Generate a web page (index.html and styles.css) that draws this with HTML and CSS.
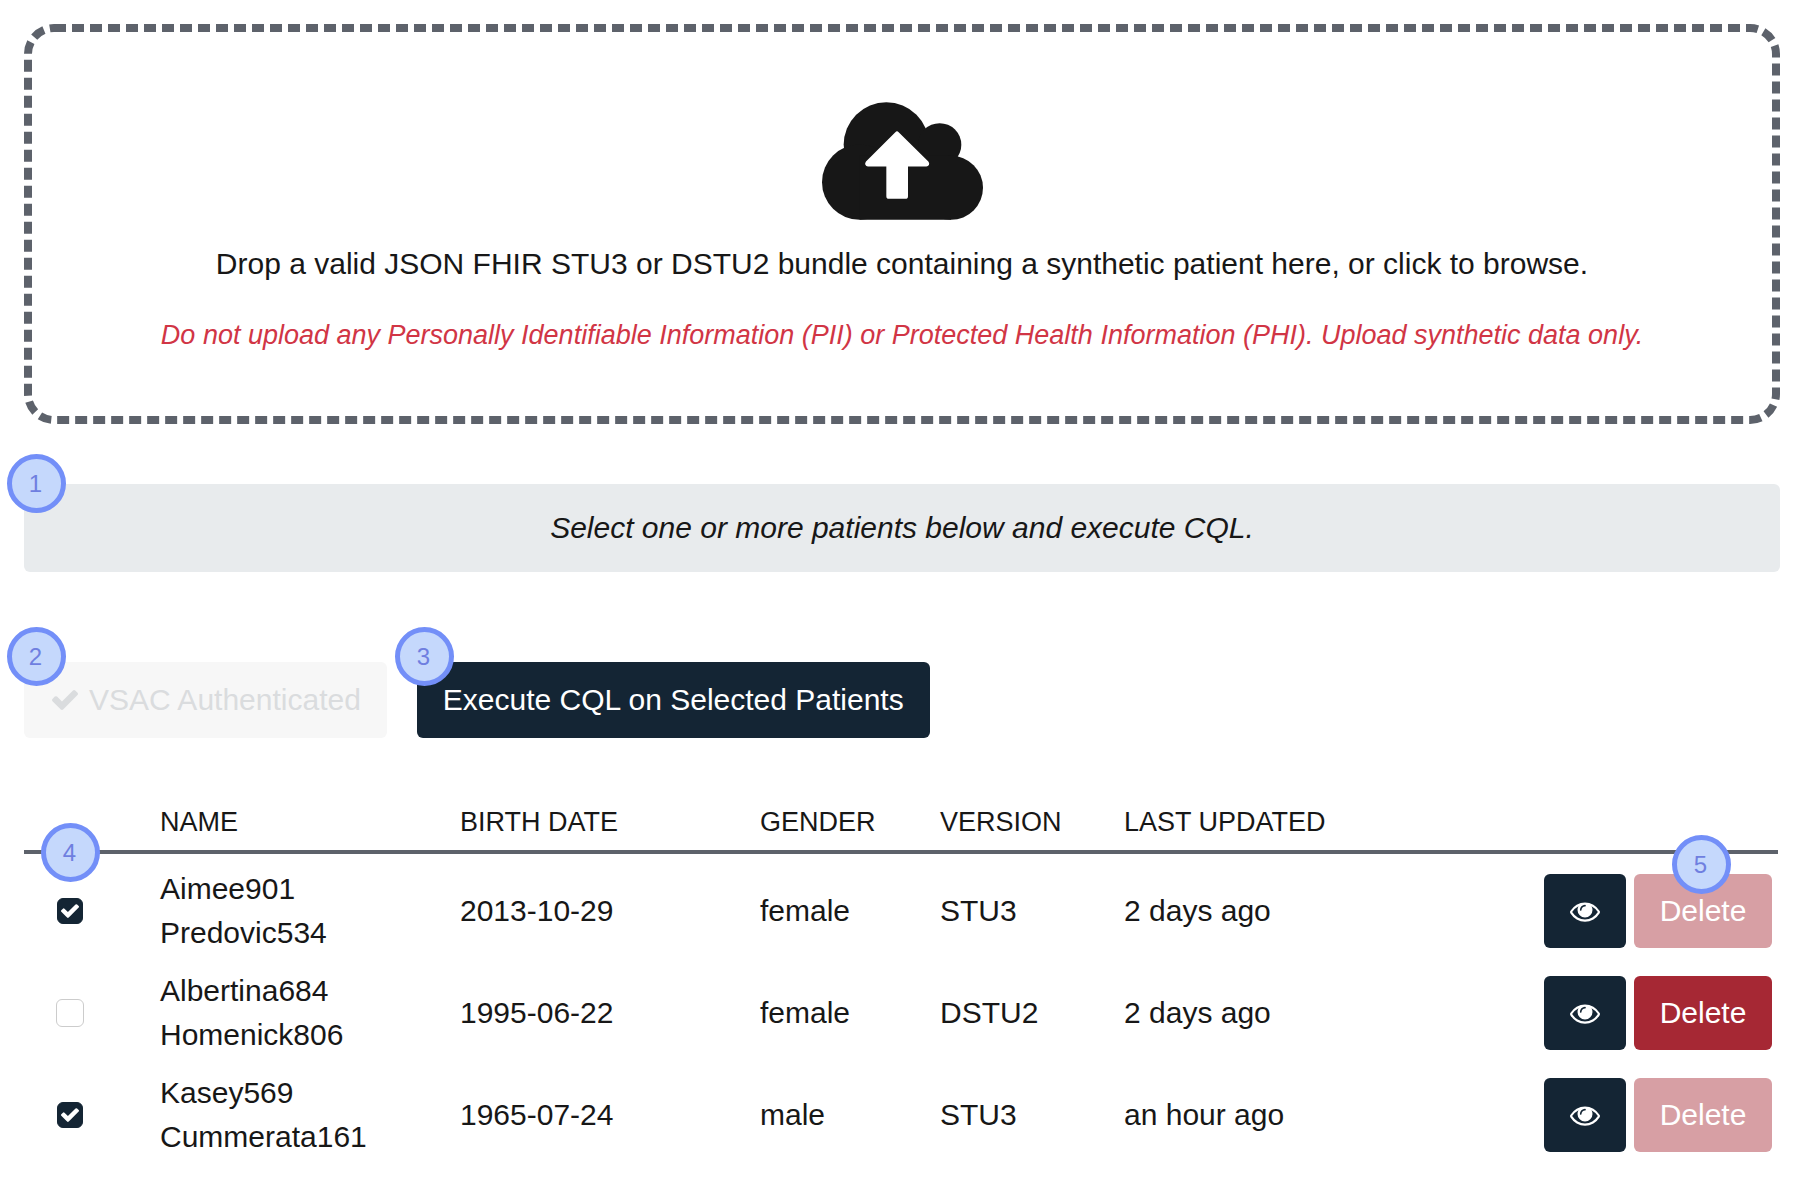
FILE: index.html
```html
<!DOCTYPE html>
<html lang="en">
<head>
<meta charset="utf-8">
<title>Patients</title>
<link rel="stylesheet" href="styles.css">
</head>
<body>
<svg class="sprite" aria-hidden="true">
  <symbol id="eye" viewBox="0 0 1792 1792"><path d="M1664 960q-152-236-381-353 61 104 61 225 0 185-131.500 316.500t-316.500 131.500-316.500-131.500-131.500-316.500q0-121 61-225-229 117-381 353 133 205 333.500 326.500t434.500 121.500 434.500-121.500 333.500-326.500zm-720-384q0-20-14-34t-34-14q-125 0-214.500 89.500t-89.500 214.500q0 20 14 34t34 14 34-14 14-34q0-86 61-147t147-61q20 0 34-14t14-34zm848 384q0 34-20 69-140 230-376.500 368.500t-499.500 138.500-499.500-139-376.500-368q-20-35-20-69t20-69q140-229 376.500-368t499.500-139 499.500 139 376.500 368q20 35 20 69z"/></symbol>
  <symbol id="check" viewBox="121 330 1550 1192"><path d="M1671 566q0 40-28 68l-724 724-136 136q-28 28-68 28t-68-28l-136-136-362-362q-28-28-28-68t28-68l136-136q28-28 68-28t68 28l294 295 656-657q28-28 68-28t68 28l136 136q28 28 28 68z"/></symbol>
</svg>
<main class="page">
  <label class="dropzone">
    <input class="dropzone-input" type="file" accept=".json">
    <svg class="dropzone-outline" aria-hidden="true"><rect x="4" y="4" rx="26"/></svg>
    <svg class="cloud" viewBox="125 66 483 353" aria-hidden="true">
      <circle cx="318" cy="194" r="128"/><circle cx="478" cy="194" r="65"/>
      <circle cx="238" cy="306" r="113"/><circle cx="512" cy="323" r="96"/>
      <path d="M238 227H512V419H238z"/>
      <path class="cloud-arrow" d="M345 156q5-5 10 0l89 88q4 5 2 10t-8 5h-55v89q0 8-8 8h-49q-8 0-8-8v-89h-55q-6 0-8-5t2-10z"/>
    </svg>
    <span class="dropzone-text">Drop a valid JSON FHIR STU3 or DSTU2 bundle containing a synthetic patient here, or click to browse.</span>
    <span class="dropzone-warning">Do not upload any Personally Identifiable Information (PII) or Protected Health Information (PHI). Upload synthetic data only.</span>
  </label>

  <p class="notice"><span class="badge badge-corner">1</span>Select one or more patients below and execute CQL.</p>

  <div class="actions">
    <div class="anchor">
      <button class="button button-ghost" type="button" disabled><svg class="icon-check" aria-hidden="true"><use href="#check"/></svg>VSAC Authenticated</button>
      <span class="badge badge-button">2</span>
    </div>
    <div class="anchor">
      <button class="button" type="button">Execute CQL on Selected Patients</button>
      <span class="badge badge-button badge-inset">3</span>
    </div>
  </div>

  <table class="patients">
    <colgroup><col class="col-select"><col class="col-name"><col class="col-birth"><col class="col-gender"><col class="col-version"><col></colgroup>
    <thead>
      <tr><th class="anchor"><span class="badge badge-select">4</span></th><th>NAME</th><th>BIRTH DATE</th><th>GENDER</th><th>VERSION</th><th colspan="2">LAST UPDATED</th></tr>
    </thead>
    <tbody>
      <tr>
        <td><label class="tick"><input type="checkbox" checked aria-label="Select Aimee901 Predovic534"><svg aria-hidden="true"><use href="#check"/></svg></label></td>
        <td>Aimee901<br>Predovic534</td><td>2013-10-29</td><td>female</td><td>STU3</td><td>2 days ago</td>
        <td><div class="row-actions"><button class="button button-view" type="button" aria-label="View"><svg class="icon-eye" aria-hidden="true"><use href="#eye"/></svg></button><span class="anchor"><button class="button button-delete" type="button" disabled>Delete</button><span class="badge badge-delete">5</span></span></div></td>
      </tr>
      <tr>
        <td><label class="tick"><input type="checkbox" aria-label="Select Albertina684 Homenick806"><svg aria-hidden="true"><use href="#check"/></svg></label></td>
        <td>Albertina684<br>Homenick806</td><td>1995-06-22</td><td>female</td><td>DSTU2</td><td>2 days ago</td>
        <td><div class="row-actions"><button class="button button-view" type="button" aria-label="View"><svg class="icon-eye" aria-hidden="true"><use href="#eye"/></svg></button><button class="button button-delete" type="button">Delete</button></div></td>
      </tr>
      <tr>
        <td><label class="tick"><input type="checkbox" checked aria-label="Select Kasey569 Cummerata161"><svg aria-hidden="true"><use href="#check"/></svg></label></td>
        <td>Kasey569<br>Cummerata161</td><td>1965-07-24</td><td>male</td><td>STU3</td><td>an hour ago</td>
        <td><div class="row-actions"><button class="button button-view" type="button" aria-label="View"><svg class="icon-eye" aria-hidden="true"><use href="#eye"/></svg></button><button class="button button-delete" type="button" disabled>Delete</button></div></td>
      </tr>
    </tbody>
  </table>
</main>
</body>
</html>
```

FILE: styles.css
```css
* { box-sizing: border-box; }

body {
  margin: 0;
  background: #fff;
  color: #171717;
  font: 30px/44px "Liberation Sans", Arial, sans-serif;
}

.sprite { position: absolute; width: 0; height: 0; }

.page { padding: 24px 24px 0; }

.anchor { position: relative; }

/* Upload area */
.dropzone {
  position: relative;
  display: flex;
  flex-direction: column;
  align-items: center;
  padding: 78px 24px 67px;
  text-align: center;
  cursor: pointer;
}

.dropzone-input {
  position: absolute;
  width: 1px;
  height: 1px;
  opacity: 0;
}

.dropzone-outline {
  position: absolute;
  inset: 0;
  width: 100%;
  height: 100%;
}

.dropzone-outline rect {
  width: calc(100% - 8px);
  height: calc(100% - 8px);
  fill: none;
  stroke: #5d626b;
  stroke-width: 8px;
  stroke-dasharray: 12 6;
}

.cloud { width: 161px; height: 118px; margin-bottom: 22px; fill: #171717; }
.cloud-arrow { fill: #fff; }

.dropzone-warning {
  margin-top: 27px;
  color: #d13545;
  font-size: 27px;
  font-style: italic;
}

/* Instruction bar */
.notice {
  position: relative;
  margin: 60px 0 90px;
  padding: 22px;
  border-radius: 6px;
  background: #e8ebed;
  font-style: italic;
  text-align: center;
}

/* Buttons */
.actions { display: flex; flex-wrap: wrap; gap: 30px; }

.button {
  display: flex;
  align-items: center;
  justify-content: center;
  padding: 16px 26px;
  border: 0;
  border-radius: 6px;
  background: #142534;
  color: #fff;
  font: inherit;
}

.button-ghost { gap: 11px; background: #f7f7f7; color: #dadcde; padding-left: 28px; }
.button-view { width: 82px; height: 74px; }
.button-delete { width: 138px; height: 74px; background: #a62834; }
.button-delete:disabled { background: #d79fa4; }

.icon-check { width: 26px; height: 20px; fill: currentColor; }
.icon-eye { width: 30px; height: 30px; fill: currentColor; flex: none; }

/* Patient table */
.patients {
  width: calc(100% - 2px);
  margin-top: 64px;
  border-spacing: 0;
}

.col-select { width: 136px; }
.col-name { width: 300px; }
.col-birth { width: 300px; }
.col-gender { width: 180px; }
.col-version { width: 184px; }

.patients th {
  height: 52px;
  padding: 0 0 8px;
  border-bottom: 4px solid #5d626b;
  font-size: 27px;
  font-weight: 400;
  line-height: 40px;
  text-align: left;
}

.patients tbody::before { content: ""; display: block; height: 6px; }

.patients td { padding: 7px 0; }

.tick { display: grid; width: 28px; margin-left: 32px; place-items: center; }

.tick input {
  grid-area: 1 / 1;
  appearance: none;
  width: 28px;
  height: 28px;
  margin: 0;
  border: 1px solid #ccc;
  border-radius: 6px;
  background: #fff;
}

.tick input:checked { width: 26px; height: 26px; border-color: #142534; background: #142534; }

.tick svg { grid-area: 1 / 1; width: 18px; height: 14px; fill: #fff; pointer-events: none; }

.row-actions { display: flex; justify-content: flex-end; gap: 8px; padding-right: 6px; }

/* Numbered callouts */
.badge {
  position: absolute;
  width: 59px;
  height: 59px;
  padding-right: 2px;
  border: 5px solid #738ff8;
  border-radius: 50%;
  background: #c5d8fc;
  color: #6f7fe0;
  font-size: 24px;
  font-style: normal;
  line-height: 49px;
  text-align: center;
}

.badge-corner { top: -30px; left: -17px; }
.badge-button { top: -35px; left: -17px; }
.badge-inset { left: -22px; }
.badge-select { bottom: -32px; left: 17px; }
.badge-delete { top: -39px; left: 38px; }
```
